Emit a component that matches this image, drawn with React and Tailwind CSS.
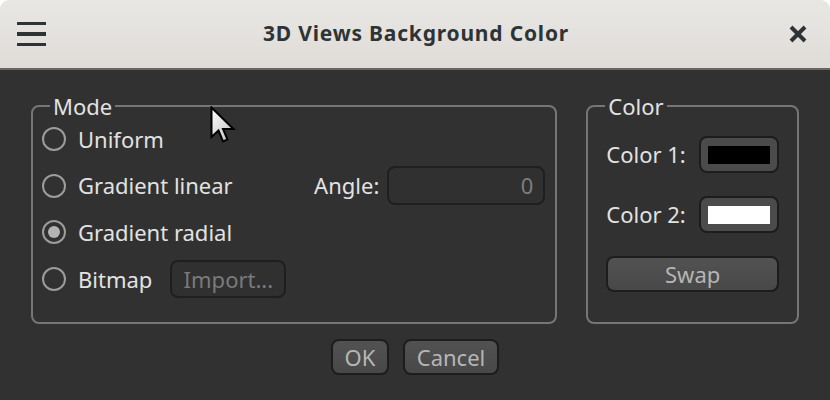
import React from 'react';

const font = { fontFamily: '"Noto Sans", "Open Sans", sans-serif' };

// Radio circle with optional dot
const Radio = ({ checked }) => (
  <span className="w-[24px] h-[24px] rounded-full border-2 border-[#9c9c9c] flex items-center justify-center shrink-0">
    {checked && <span className="w-[12px] h-[12px] rounded-full bg-[#b4b4b4]" />}
  </span>
);

const Button = ({ children, className = '' }) => (
  <button
    className={`rounded-[8px] border-2 border-[#1d1d1d] bg-gradient-to-b from-[#525252] to-[#484848] text-[#b6b6b6] text-[22px] leading-none flex items-center justify-center ${className}`}
  >
    {children}
  </button>
);

const ColorButton = ({ color }) => (
  <button className="w-[80px] h-[37px] rounded-[8px] border-2 border-[#1d1d1d] bg-[#4b4b4b] flex items-center justify-center">
    <span className={`w-[62px] h-[18px] ${color}`} />
  </button>
);

const App = () => {
  return (
    <div className="w-[830px] h-[400px] bg-white relative overflow-hidden" style={font}>
      {/* Title bar */}
      <div className="h-[70px] rounded-t-[9px] bg-gradient-to-b from-[#e9e7e4] to-[#dfdcd8] border-b-2 border-[#6c6660] grid grid-cols-[1fr_auto_1fr] items-center px-[17px]">
        <div className="flex flex-col gap-[7px] w-[29px]">
          <span className="h-[3.5px] bg-[#2e3436]" />
          <span className="h-[3.5px] bg-[#2e3436]" />
          <span className="h-[3.5px] bg-[#2e3436]" />
        </div>
        <h1 className="text-[21px] font-bold text-[#2e3436] tracking-[0.8px] ml-[2px]">3D Views Background Color</h1>
        <div className="flex justify-end pr-[6px]">
          <svg width="18" height="18" viewBox="0 0 18 18">
            <path d="M2 2 L16 16 M16 2 L2 16" stroke="#2e3436" strokeWidth="4" strokeLinecap="butt" />
          </svg>
        </div>
      </div>

      {/* Body */}
      <div className="h-[330px] bg-[#313131] px-[31px] pt-[22px] text-[22px] text-[#e2e2e2]">
        <div className="flex gap-[29px] h-[232px]">
          {/* Mode group */}
          <fieldset className="w-[527px] border-2 border-[#767676] rounded-[8px]">
            <legend className="ml-[17px] px-[3px] leading-[28px]">Mode</legend>
            <div className="flex flex-col gap-[8.7px] pl-[9px] pr-[10px]">
              <div className="h-[38px] flex items-center gap-[12px]">
                <Radio />
                <span>Uniform</span>
              </div>
              <div className="h-[38px] flex items-center gap-[12px]">
                <Radio />
                <span>Gradient linear</span>
                <span className="ml-auto">Angle:</span>
                <div className="w-[158px] h-[39px] -ml-[4px] rounded-[8px] border-2 border-[#1f1f1f] bg-[#303030] flex items-center justify-end pr-[10px] text-[#7e7e7e]">
                  0
                </div>
              </div>
              <div className="h-[38px] flex items-center gap-[12px]">
                <Radio checked />
                <span>Gradient radial</span>
              </div>
              <div className="h-[38px] flex items-center gap-[12px]">
                <Radio />
                <span>Bitmap</span>
                <button className="ml-[6px] w-[116px] h-[38px] rounded-[8px] border-2 border-[#1f1f1f] bg-[#303030] text-[#7a7a7a] text-[22px] leading-none">
                  Import...
                </button>
              </div>
            </div>
          </fieldset>

          {/* Color group */}
          <fieldset className="w-[213px] border-2 border-[#767676] rounded-[8px]">
            <legend className="ml-[17px] px-[3px] leading-[28px]">Color</legend>
            <div className="flex flex-col gap-[23px] px-[18px] pt-[16px]">
              <div className="h-[37px] flex items-center justify-between">
                <span>Color 1:</span>
                <ColorButton color="bg-black" />
              </div>
              <div className="h-[37px] flex items-center justify-between">
                <span>Color 2:</span>
                <ColorButton color="bg-white" />
              </div>
              <Button className="h-[36px] w-full">Swap</Button>
            </div>
          </fieldset>
        </div>

        {/* Dialog buttons */}
        <div className="flex justify-center gap-[14px] mt-[15px]">
          <Button className="w-[58px] h-[36px]">OK</Button>
          <Button className="w-[96px] h-[36px]">Cancel</Button>
        </div>
      </div>

      {/* Mouse cursor */}
      <svg className="absolute left-[210px] top-[106px]" width="28" height="40" viewBox="0 0 28 40">
        <defs>
          <linearGradient id="cur" x1="0" y1="0" x2="1" y2="1">
            <stop offset="0" stopColor="#ffffff" />
            <stop offset="1" stopColor="#bdbdbd" />
          </linearGradient>
        </defs>
        <path
          d="M1.5 1.5 L1.5 31 L8.5 24.5 L13 35.5 L17.5 33.5 L13 23 L23.5 23 Z"
          fill="url(#cur)"
          stroke="#000"
          strokeWidth="2"
          strokeLinejoin="miter"
        />
      </svg>
    </div>
  );
};

export default App;
